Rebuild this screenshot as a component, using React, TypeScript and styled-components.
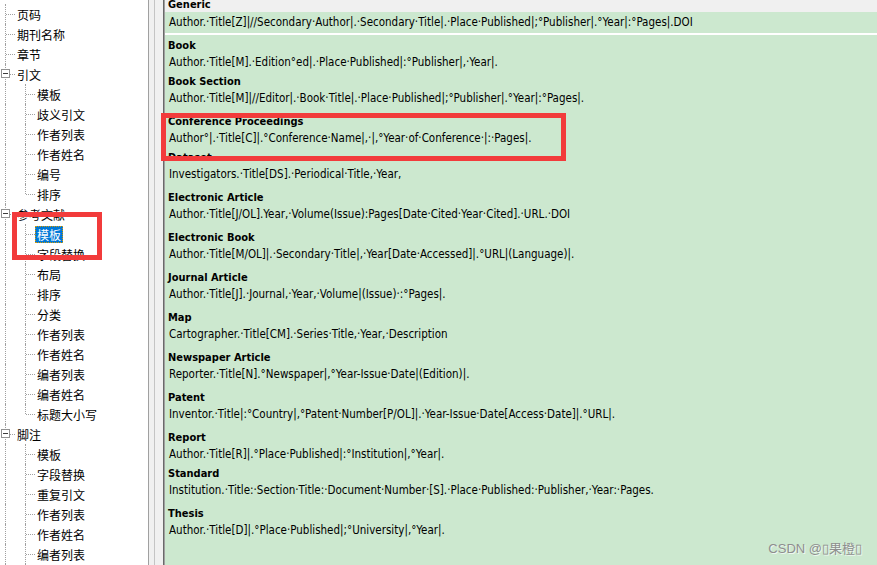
import React from 'react'
import styled, { createGlobalStyle, css } from 'styled-components'

const GlobalStyle = createGlobalStyle`
    html, body {
        margin: 0;
        padding: 0;
        width: 100%;
        height: 100%;
        overflow: hidden;
        background: #fff;
    }
    #root {
        height: 100%;
    }
`

const Window = styled.div`
    position: relative;
    display: flex;
    width: 877px;
    height: 565px;
    overflow: hidden;
`

// ---- left tree ----

const TreePane = styled.div`
    flex: none;
    width: 148px;
    padding-top: 4px;
    background: #fff;
    overflow: hidden;
    font-family: "Microsoft YaHei", "Noto Sans CJK SC", sans-serif;
    font-size: 12px;
    color: #000;
`

const TreeRow = styled.div`
    display: flex;
    align-items: center;
    height: 20px;
`

const Gutter = styled.span<{ $branch?: boolean; $last?: boolean }>`
    position: relative;
    flex: none;
    align-self: stretch;
    width: ${({ $branch }) => ($branch ? 15 : 20)}px;

    &::before {
        content: '';
        position: absolute;
        left: 5px;
        top: 0;
        height: ${({ $last }) => ($last ? '10px' : '100%')};
        border-left: 1px dotted #a0a0a0;
    }

    ${({ $branch }) =>
        $branch &&
        css`
            &::after {
                content: '';
                position: absolute;
                left: 6px;
                top: 10px;
                width: 9px;
                border-top: 1px dotted #a0a0a0;
            }
        `}
`

const Expander = styled.span`
    position: absolute;
    z-index: 1;
    left: 1px;
    top: 5px;
    width: 7px;
    height: 7px;
    border: 1px solid #919191;
    background: #fff;

    &::after {
        content: '';
        position: absolute;
        left: 1px;
        top: 3px;
        width: 5px;
        height: 1px;
        background: #3c3c3c;
    }
`

const NodeLabel = styled.span<{ $selected?: boolean }>`
    padding: 0 2px;
    line-height: 17px;
    white-space: nowrap;

    ${({ $selected }) =>
        $selected &&
        css`
            background: #0078d7;
            color: #fff;
            outline: 1px dotted #d89a00;
            outline-offset: -1px;
        `}
`

// ---- splitter ----

const Splitter = styled.div`
    flex: none;
    width: 17px;
    background: linear-gradient(
        to right,
        #a0a0a0 0 1px,
        #f0f0f0 1px 6px,
        #c4c4c4 6px 7px,
        #f0f0f0 7px 15px,
        #696969 15px 16px,
        #a0a0a0 16px 17px
    );
`

// ---- style editor ----

const Editor = styled.div`
    flex: 1;
    min-width: 0;
    display: flex;
    flex-direction: column;
    background: #cce8cf;
    font-family: "DejaVu Sans Condensed", Tahoma, "DejaVu Sans", sans-serif;
    font-size: 11px;
    color: #000;
`

const FrozenHead = styled.div`
    height: 12px;
    padding-left: 3px;
    background: #f0f0f0;
    overflow: hidden;
`

const TypeName = styled.div`
    font-weight: bold;
    line-height: 17px;
    white-space: nowrap;
`

const HeadName = styled(TypeName)`
    line-height: 10px;
`

const FrozenRow = styled.div`
    display: flex;
    align-items: center;
    height: 21px;
    padding-left: 3px;
`

const Divider = styled.div`
    height: 2px;
    background: #fff;
`

const Body = styled.div`
    flex: 1;
    padding: 2px 0 0 3px;
    overflow: hidden;
`

const Entry = styled.div<{ $tight?: boolean }>`
    margin-bottom: ${({ $tight }) => ($tight ? 2 : 6)}px;
`

const Template = styled.div`
    padding-left: 1px;
    font-size: 11.5px;
    line-height: 17px;
    white-space: nowrap;
`

// ---- overlays ----

const Marker = styled.div<{ $x: number; $y: number; $w: number; $h: number }>`
    position: absolute;
    left: ${({ $x }) => $x}px;
    top: ${({ $y }) => $y}px;
    width: ${({ $w }) => $w}px;
    height: ${({ $h }) => $h}px;
    box-sizing: border-box;
    border: 5px solid #f23b3b;
    pointer-events: none;
`

const Watermark = styled.div`
    position: absolute;
    right: 15px;
    bottom: 8px;
    font-family: "Liberation Sans", "Noto Sans CJK SC", sans-serif;
    font-size: 13px;
    color: #8e8e8e;
    text-shadow: 1px 1px 0 rgba(255, 255, 255, 0.7);
    pointer-events: none;
`

type Node = { label: string; selected?: boolean; children?: Node[] }

const tree: Node[] = [
    { label: '页码' },
    { label: '期刊名称' },
    { label: '章节' },
    {
        label: '引文',
        children: ['模板', '歧义引文', '作者列表', '作者姓名', '编号', '排序'].map((label) => ({ label })),
    },
    {
        label: '参考文献',
        children: [
            { label: '模板', selected: true },
            ...['字段替换', '布局', '排序', '分类', '作者列表', '作者姓名', '编者列表', '编者姓名', '标题大小写'].map(
                (label) => ({ label })
            ),
        ],
    },
    {
        label: '脚注',
        children: ['模板', '字段替换', '重复引文', '作者列表', '作者姓名', '编者列表', '编者姓名', '标题大小写'].map(
            (label) => ({ label })
        ),
    },
    { label: '图表' },
]

const generic =
    'Author.·Title[Z]|//Secondary·Author|.·Secondary·Title|.·Place·Published|;°Publisher|.°Year|:°Pages|.DOI'

const types: { name: string; template: string; tight?: boolean }[] = [
    { name: 'Book', template: 'Author.·Title[M].·Edition°ed|.·Place·Published|:°Publisher|,·Year|.', tight: true },
    { name: 'Book Section', template: 'Author.·Title[M]|//Editor|.·Book·Title|.·Place·Published|;°Publisher|.°Year|:°Pages|.' },
    {
        name: 'Conference Proceedings',
        template: 'Author°|.·Title[C]|.°Conference·Name|,·|,°Year·of·Conference·|:·Pages|.',
        tight: true,
    },
    { name: 'Dataset', template: 'Investigators.·Title[DS].·Periodical·Title,·Year,' },
    {
        name: 'Electronic Article',
        template: 'Author.·Title[J/OL].Year,·Volume(Issue):Pages[Date·Cited·Year·Cited].·URL.·DOI',
    },
    {
        name: 'Electronic Book',
        template: 'Author.·Title[M/OL]|.·Secondary·Title|,·Year[Date·Accessed]|.°URL|(Language)|.',
    },
    { name: 'Journal Article', template: 'Author.·Title[J].·Journal,·Year,·Volume|(Issue)·:°Pages|.' },
    { name: 'Map', template: 'Cartographer.·Title[CM].·Series·Title,·Year,·Description' },
    { name: 'Newspaper Article', template: 'Reporter.·Title[N].°Newspaper|,°Year-Issue·Date|(Edition)|.' },
    {
        name: 'Patent',
        template: 'Inventor.·Title|:°Country|,°Patent·Number[P/OL]|.·Year-Issue·Date[Access·Date]|.°URL|.',
    },
    { name: 'Report', template: 'Author.·Title[R]|.°Place·Published|:°Institution|,°Year|.', tight: true },
    {
        name: 'Standard',
        template: 'Institution.·Title:·Section·Title:·Document·Number·[S].·Place·Published:·Publisher,·Year:·Pages.',
    },
    { name: 'Thesis', template: 'Author.·Title[D]|.°Place·Published|;°University|,°Year|.' },
]

function Tree() {
    return (
        <TreePane>
            {tree.map((node) => (
                <React.Fragment key={node.label}>
                    <TreeRow>
                        <Gutter $branch>{node.children && <Expander />}</Gutter>
                        <NodeLabel>{node.label}</NodeLabel>
                    </TreeRow>
                    {node.children?.map((child, i) => (
                        <TreeRow key={node.label + i}>
                            <Gutter />
                            <Gutter $branch $last={i === node.children!.length - 1} />
                            <NodeLabel $selected={child.selected}>{child.label}</NodeLabel>
                        </TreeRow>
                    ))}
                </React.Fragment>
            ))}
        </TreePane>
    )
}

export default function App() {
    return (
        <Window>
            <GlobalStyle />
            <Tree />
            <Splitter />
            <Editor>
                <FrozenHead>
                    <HeadName>Generic</HeadName>
                </FrozenHead>
                <FrozenRow>
                    <Template>{generic}</Template>
                </FrozenRow>
                <Divider />
                <Body>
                    {types.map((t) => (
                        <Entry key={t.name} $tight={t.tight}>
                            <TypeName>{t.name}</TypeName>
                            <Template>{t.template}</Template>
                        </Entry>
                    ))}
                </Body>
            </Editor>
            <Marker $x={12} $y={212} $w={90} $h={48} />
            <Marker $x={161} $y={113} $w={405} $h={48} />
            <Watermark>CSDN @▯果橙▯</Watermark>
        </Window>
    )
}
